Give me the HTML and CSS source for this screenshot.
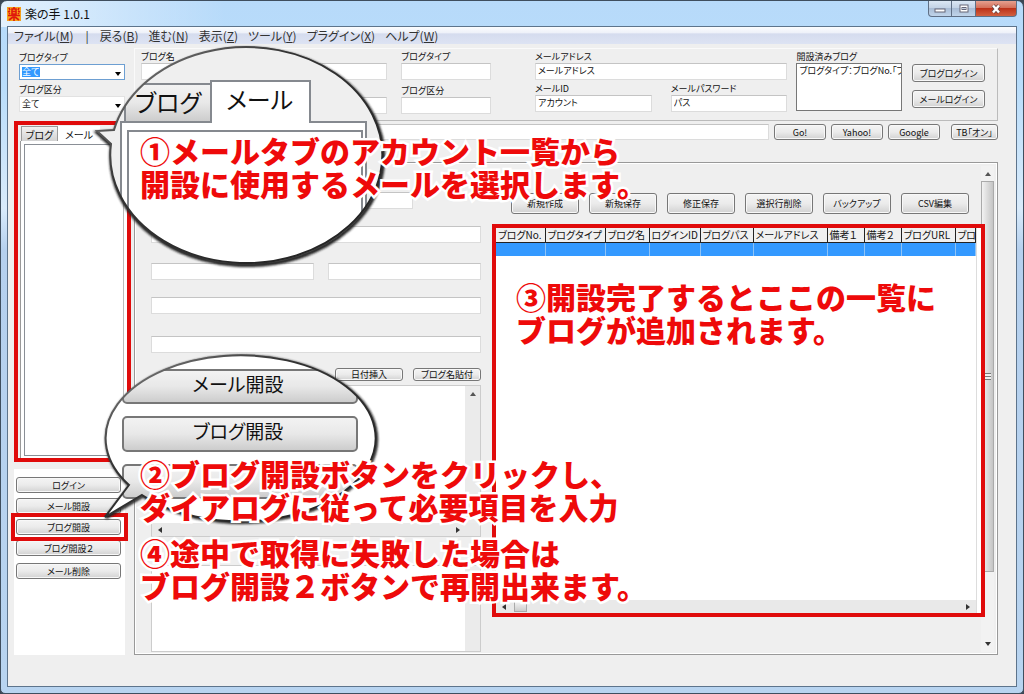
FILE: index.html
```html
<!DOCTYPE html>
<html lang="ja">
<head>
<meta charset="utf-8">
<title>楽の手 1.0.1</title>
<link rel="stylesheet" href="styles.css">
</head>
<body>
<div class="window">
  <header class="titlebar">
    <svg class="app-icon" viewBox="0 0 14 14" aria-hidden="true">
      <rect width="14" height="14" fill="#f5a21b"/>
      <path d="M7 0v2M5 2h4v5H5zM5 4.500h4M2 1l1 2M1 5l2-1M12 1l-1 2M13 5l-2-1M1 8.500h12M7 7v7M6 10l-4 3M8 10l4 3M2 7l1-1M12 7l-1-1" fill="none" stroke="#e0180c" stroke-width="1.600"/>
    </svg>
    <h1 class="title">楽の手 1.0.1</h1>
    <div class="window-buttons">
      <button class="win-btn" aria-label="最小化"><svg width="12" height="10" viewBox="0 0 12 10"><rect x="1" y="5" width="10" height="3" fill="#fff" stroke="#667"/></svg></button>
      <button class="win-btn" aria-label="元に戻す"><svg width="12" height="10" viewBox="0 0 12 10"><rect x="2" y="1" width="8" height="7" fill="#fff" stroke="#667"/><rect x="4" y="3.500" width="4" height="2" fill="#c3cfe0" stroke="#667"/></svg></button>
      <button class="win-btn win-close" aria-label="閉じる"><svg width="12" height="10" viewBox="0 0 12 10"><path d="M3 1.500l6 7M9 1.500l-6 7" stroke="#644" stroke-width="4"/><path d="M3 1.500l6 7M9 1.500l-6 7" stroke="#fff" stroke-width="2.400"/></svg></button>
    </div>
  </header>

  <nav class="menu">
    <span>ファイル(<u>M</u>)</span><span class="sep">|</span><span>戻る(<u>B</u>)</span><span>進む(<u>N</u>)</span><span>表示(<u>Z</u>)</span><span>ツール(<u>Y</u>)</span><span>プラグイン(<u>X</u>)</span><span>ヘルプ(<u>W</u>)</span>
  </nav>

  <main class="work">
    <aside class="side">
      <div class="filters">
        <label class="field"><span>ブログタイプ</span><span class="combo combo-focus"><select class="picked"><option>全て</option></select></span></label>
        <label class="field"><span>ブログ区分</span><span class="combo"><select><option>全て</option></select></span></label>
      </div>
      <section class="accounts">
        <div class="tabs"><button class="tab">ブログ</button><button class="tab tab-on">メール</button></div>
        <div class="account-page"><div class="account-list"></div></div>
      </section>
      <div class="actions">
        <button class="btn">ログイン</button>
        <button class="btn">メール開設</button>
        <div class="marked"><button class="btn">ブログ開設</button></div>
        <button class="btn">ブログ開設２</button>
        <button class="btn btn-apart">メール削除</button>
      </div>
    </aside>

    <div class="body">
      <section class="info">
        <div class="info-col">
          <label class="field"><span>ブログ名</span><input type="text"></label>
          <div class="field"><span></span><input type="text" aria-label="URL"></div>
        </div>
        <div class="info-col">
          <label class="field"><span>ブログタイプ</span><input type="text"></label>
          <label class="field"><span>ブログ区分</span><input type="text"></label>
        </div>
        <div class="info-col info-mail">
          <label class="field"><span>メールアドレス</span><input type="text" value="メールアドレス"></label>
          <div class="pair">
            <label class="field"><span>メールID</span><input type="text" value="アカウント"></label>
            <label class="field"><span>メールパスワード</span><input type="text" value="パス"></label>
          </div>
        </div>
        <label class="field info-list"><span>開設済みブログ</span><select size="4"><option>ブログタイプ：ブログNo.「ブログ名」</option></select></label>
        <div class="logins">
          <button class="btn">ブログログイン</button>
          <button class="btn">メールログイン</button>
        </div>
      </section>

      <div class="url">
        <input type="text" aria-label="アドレス">
        <button class="btn">Go!</button>
        <button class="btn">Yahoo!</button>
        <button class="btn">Google</button>
        <button class="btn btn-tb">TB「オン」</button>
      </div>

      <section class="pane">
        <div class="form">
          <input class="short" type="text" aria-label="件名">
          <input type="text" aria-label="項目1">
          <div class="halves"><input type="text" aria-label="項目2"><input type="text" aria-label="項目3"></div>
          <input type="text" aria-label="項目4">
          <input type="text" aria-label="項目5">
          <div class="form-buttons"><button class="btn">日付挿入</button><button class="btn">ブログ名貼付</button></div>
          <div class="editor">
            <textarea aria-label="本文"></textarea>
            <div class="vbar"><i class="arrow up"></i></div>
            <div class="hbar"><i class="arrow left"></i><i class="arrow right"></i></div>
          </div>
          <div></div>
          <div class="editor">
            <textarea aria-label="追記"></textarea>
            <div class="vbar"></div>
          </div>
        </div>

        <div class="records">
          <div class="record-buttons">
            <button class="btn">新規作成</button><button class="btn">新規保存</button><button class="btn">修正保存</button><button class="btn">選択行削除</button><button class="btn">バックアップ</button><button class="btn">CSV編集</button>
          </div>
          <div class="grid-box">
            <table class="grid">
              <colgroup><col class="c49"><col class="c60"><col class="c44"><col class="c51"><col class="c53"><col class="c74"><col class="c37"><col class="c37"><col class="c54"><col></colgroup>
              <thead><tr><th>ブログNo.</th><th>ブログタイプ</th><th>ブログ名</th><th>ログインID</th><th>ブログパス</th><th>メールアドレス</th><th>備考１</th><th>備考２</th><th>ブログURL</th><th>ブロ</th></tr></thead>
              <tbody><tr><td></td><td></td><td></td><td></td><td></td><td></td><td></td><td></td><td></td><td></td></tr></tbody>
            </table>
            <div class="hbar"><i class="arrow left"></i><i class="thumb"></i><i class="arrow right"></i></div>
          </div>
        </div>

        <div class="pane-bar"><i class="arrow up"></i><i class="thumb"></i><i class="arrow down"></i></div>
      </section>
    </div>
  </main>

  <div class="notes">
    <svg class="balloons" width="1024" height="694" viewBox="0 0 1024 694">
      <defs>
        <linearGradient id="face" x1="0" y1="0" x2="0" y2="1"><stop offset="0" stop-color="#f3f3f3"/><stop offset=".5" stop-color="#e8e8e8"/><stop offset="1" stop-color="#cbcbcb"/></linearGradient>
        <linearGradient id="rim" x1="0" y1="0" x2="1" y2="1"><stop offset="0" stop-color="#8a8a8a"/><stop offset=".35" stop-color="#333"/><stop offset="1" stop-color="#222"/></linearGradient>
        <filter id="soft" x="-10%" y="-10%" width="120%" height="120%"><feGaussianBlur stdDeviation="1"/></filter>
        <path id="b1" d="M114 130L97 131L111 144A136 108 0 1 0 114 130Z"/>
        <path id="b2" d="M129 485L105 517L142 495A135 83 0 1 0 129 485Z"/>
        <clipPath id="clip1"><use href="#b1"/></clipPath>
        <clipPath id="clip2"><use href="#b2"/></clipPath>
      </defs>

      <use href="#b1" transform="translate(1 2)" fill="none" stroke="#222" stroke-width="4" filter="url(#soft)"/>
      <use href="#b1" fill="#efefef"/>
      <g clip-path="url(#clip1)" stroke="#85898f" stroke-width="2">
        <path d="M125 84H211V122H125Z" fill="url(#face)"/>
        <path d="M121 280V122H211V81H310V122H366V280Z" fill="#fff"/>
        <path d="M128 280V131H362V280Z" fill="#fff"/>
        <g stroke="none" class="big-tab"><text x="135" y="112">ブログ</text><text x="226" y="109">メール</text></g>
      </g>
      <use href="#b1" fill="none" stroke="url(#rim)" stroke-width="2"/>

      <use href="#b2" transform="translate(1 1)" fill="none" stroke="#222" stroke-width="3" filter="url(#soft)"/>
      <use href="#b2" fill="#fff"/>
      <g clip-path="url(#clip2)">
        <g fill="url(#face)" stroke="#777" stroke-width="2">
          <rect x="123" y="370" width="234" height="33" rx="4"/>
          <rect x="123" y="417" width="234" height="34" rx="4"/>
          <rect x="123" y="465" width="234" height="33" rx="4"/>
        </g>
        <g class="big-btn"><text x="238" y="392">メール開設</text><text x="238" y="439">ブログ開設</text></g>
      </g>
      <use href="#b2" fill="none" stroke="url(#rim)" stroke-width="2"/>
    </svg>
    <p class="note note-1">①メールタブのアカウント一覧から<br>開設に使用するメールを選択します。</p>
    <p class="note note-2">②ブログ開設ボタンをクリックし、<br>ダイアログに従って必要項目を入力</p>
    <p class="note note-3">③開設完了するとここの一覧に<br>ブログが追加されます。</p>
    <p class="note note-4">④途中で取得に失敗した場合は<br>ブログ開設２ボタンで再開出来ます。</p>
  </div>
</div>
</body>
</html>
```

FILE: styles.css
```css
* { box-sizing: border-box; }

body {
  margin: 0;
  background: #3a4654;
  color: #111;
  font: 9px/12px "Noto Sans CJK JP", sans-serif;
  font-feature-settings: "palt";
}

input, select, textarea, button {
  margin: 0;
  font: inherit;
  font-feature-settings: inherit;
  color: inherit;
}

.window {
  position: relative;
  display: grid;
  grid-template-rows: 25px 18px 1fr;
  min-height: 100vh;
  padding: 0 6px 6px;
  border: 1px solid #3f4e5e;
  border-radius: 7px 7px 5px 5px;
  background:
    linear-gradient(90deg, rgba(255, 255, 255, .6), rgba(255, 255, 255, 0) 22%) top / 100% 26px no-repeat,
    linear-gradient(180deg, #b7dafa, #b9ddfb 12%, #d9ebfb 30%, #b5d0ee 36%, #b8d4f0);
  overflow: hidden;
}

/* title bar */
.titlebar { display: flex; align-items: center; gap: 4px; }
.app-icon { width: 14px; height: 14px; }
.title { flex: 1; margin: 0; font-size: 12px; line-height: 16px; font-weight: 400; }
.window-buttons { display: flex; align-self: flex-start; }
.win-btn {
  display: grid;
  place-items: center;
  width: 24px;
  height: 16px;
  padding: 0;
  border: 1px solid #5f6f85;
  border-top: 0;
  border-left-width: 0;
  background: linear-gradient(#dbe7f4, #c3d3e6 45%, #a9bdd6 50%, #c0d4ea);
}
.win-btn:first-child { border-left-width: 1px; border-radius: 0 0 0 4px; }
.win-close { width: 41px; border-radius: 0 0 4px 0; background: linear-gradient(#e5a08f, #d4705a 45%, #bd3219 50%, #d2603f); }

/* menu */
.menu {
  display: flex;
  align-items: center;
  gap: 10px;
  padding-left: 6px;
  border: 1px solid #5d748c;
  border-bottom: 0;
  background: linear-gradient(#fbfcfe, #eef1f9 35%, #d5dcee 40%, #dde3f3);
  color: #333;
  font-size: 12px;
  line-height: 16px;
  white-space: nowrap;
}
.sep { margin: 0 1px 0 2px; }

/* work area */
.work {
  display: grid;
  grid-template-columns: 117px minmax(0, 1fr);
  gap: 3px;
  padding: 4px 18px 31px 6px;
  border: 1px solid #5d748c;
  border-top: 0;
  background: #efefef;
}
.side { display: flex; flex-direction: column; }
.filters { display: grid; gap: 4px; padding: 4px 6px 9px 5px; }
.field { display: grid; grid-template-rows: 12px auto; min-width: 0; white-space: nowrap; }
.combo { position: relative; display: block; height: 16px; }
.combo select {
  display: block;
  width: 100%;
  height: 16px;
  padding: 0 2px;
  border: 1px solid #e2e2e2;
  border-radius: 0;
  appearance: none;
  background: #fff;
}
.combo .picked {
  border-color: #6d9fd2;
  background: linear-gradient(#3399ff, #3399ff) 2px 2px / 18px 10px no-repeat, #fff;
  color: #fff;
}
.combo::after {
  content: "";
  position: absolute;
  right: 4px;
  top: 8px;
  border: 3px solid transparent;
  border-top: 4px solid #000;
  border-bottom: 0;
}

.accounts {
  display: flex;
  flex: 1;
  flex-direction: column;
  padding: 1px 0 0 2px;
  border: 4px solid #e00b0b;
  background: #efefef;
}
.tabs { display: flex; padding-left: 1px; }
.tab { height: 15px; width: 37px; padding: 0; border: 1px solid #9a9a9a; border-bottom: 0; background: linear-gradient(#f2f2f2, #d2d2d2); font-size: 10px; line-height: 13px; }
.tab-on { width: 42px; border-color: #fff; background: #fff; }
.account-page { flex: 1; display: grid; padding: 3px 3px 2px; border-left: 1px solid #999; background: #fff; }
.account-list { border: 1px solid #8a8f96; border-right-color: #bbb; }

.actions {
  display: grid;
  align-content: start;
  gap: 5px;
  height: 186px;
  margin: 7px 6px 0 0;
  padding: 8px 4px 0 2px;
  background: #fff;
}
.btn {
  width: 100%;
  height: 16px;
  padding: 0;
  border: 1px solid #777;
  border-radius: 3px;
  background: linear-gradient(#f4f4f4, #ebebeb 50%, #d2d2d2);
  box-shadow: inset 0 0 0 1px #f8f8f8;
  line-height: 13px;
  white-space: nowrap;
}
.btn-apart { margin-top: 2px; }
.marked { position: relative; height: 16px; }
.marked::after { content: ""; position: absolute; inset: -6px -7px -6px -5px; border: 4px solid #e00b0b; }

/* account details */
.body { display: grid; grid-template-rows: 73px 16px 1fr; row-gap: 3px; min-width: 0; }
.body input, .body textarea {
  display: block;
  width: 100%;
  min-width: 0;
  height: 17px;
  padding: 0 2px 2px;
  border: 1px solid #dcdcdc;
  border-top-color: #c4c4c4;
  border-radius: 0;
  background: #fff;
}
.info {
  display: grid;
  grid-template-columns: 261fr 134fr 262fr 116fr 73fr;
  padding: 2px 12px 0 6px;
  border: 1px solid #fafafa;
  border-right-color: #bbb;
  border-bottom-color: #bbb;
}
.info-col { display: grid; align-content: start; gap: 5px; margin-right: 14px; min-width: 0; }
.info-col:nth-child(2) { margin-right: 44px; }
.info-mail { gap: 3px; margin-right: 9px; }
.pair { display: grid; grid-template-columns: 1fr 1fr; gap: 19px; }
.info-list { align-content: start; margin-right: 10px; }
.info-list select { width: 100%; height: 48px; padding: 0; border: 1px solid #777; border-radius: 0; appearance: none; background: #fff; overflow: hidden; }
.info-list option { min-height: 11px; padding: 0 2px; line-height: 11px; }
.logins { display: grid; align-content: start; gap: 8px; padding-top: 13px; }
.logins .btn { height: 18px; }

.url { display: grid; grid-template-columns: 1fr 52px 52px 52px 53px; gap: 5px; }
.body .url input { height: 16px; }
.url .btn-tb { justify-self: end; width: 47px; }

/* lower pane */
.pane {
  display: grid;
  grid-template-columns: 330px minmax(0, 1fr) 13px;
  margin-top: 19px;
  padding: 3px 3px 2px 16px;
  border: 1px solid #999;
  outline: 1px solid #fff;
  outline-offset: -2px;
}
.form { display: grid; grid-template-rows: 34px 37px 34px 39px 32px 17px 152px 28px 1fr; padding-top: 26px; min-height: 0; }
.body .short { width: 262px; }
.halves { display: grid; grid-template-columns: 163px 1fr; gap: 14px; }
.form-buttons { display: grid; grid-template-columns: 68px 68px; justify-content: end; gap: 10px; }
.form-buttons .btn { height: 13px; line-height: 11px; }
.editor { display: grid; grid-template-columns: 1fr 15px; grid-template-rows: 1fr auto; border: 1px solid #ccc; min-height: 0; }
.body .editor textarea { height: 100%; border: 0; resize: none; }
.vbar { display: flex; flex-direction: column; align-items: center; padding: 6px 0; background: #ebebeb; }
.hbar { display: flex; align-items: center; height: 13px; padding: 0 6px; background: #e9e9e9; }
.editor .hbar { grid-column: 1 / 3; justify-content: space-between; padding-right: 20px; }
.arrow { border: 3px solid transparent; }
.up { border-top: 0; border-bottom: 4px solid #555; }
.down { border-bottom: 0; border-top: 4px solid #333; }
.left { border-left: 0; border-right: 4px solid #333; }
.right { border-right: 0; border-left: 4px solid #333; }

.records { display: flex; flex-direction: column; min-width: 0; padding: 27px 0 35px 11px; }
.record-buttons { display: grid; grid-template-columns: repeat(6, 68px); gap: 10px; margin-left: 19px; }
.record-buttons .btn { height: 21px; line-height: 18px; }
.grid-box {
  position: relative;
  display: flex;
  flex: 1;
  flex-direction: column;
  justify-content: space-between;
  margin: 10px -4px 0 0;
  padding-right: 5px;
  border: 4px solid #e00b0b;
  background: linear-gradient(#ddd, #ddd) right 4px top / 1px 100% no-repeat, #fff;
}
.grid { width: 100%; table-layout: fixed; border-collapse: collapse; font-size: 10px; }
.grid th { height: 14px; padding: 0 0 0 2px; border-right: 1px solid #222; border-bottom: 1px solid #222; background: #f0f0f0; line-height: 13px; font-weight: 400; text-align: left; white-space: nowrap; overflow: hidden; }
.grid td { height: 14px; padding: 0; border-right: 1px solid #8fc3f5; background: #3399ff; }
.c37 { width: 37px; }
.c44 { width: 44px; }
.c49 { width: 49px; }
.c51 { width: 51px; }
.c53 { width: 53px; }
.c54 { width: 54px; }
.c60 { width: 60px; }
.c74 { width: 74px; }
.grid-box .hbar .thumb { width: 13px; height: 11px; margin-left: 8px; border: 1px solid #aaa; background: linear-gradient(#f4f4f4, #ccc); }
.grid-box .hbar .right { margin-left: auto; }
.pane-bar { display: flex; flex-direction: column; align-items: center; padding: 6px 0; background: #f2f2f2; }
.pane-bar .thumb {
  flex: 0 1 391px;
  width: 100%;
  margin: 5px 0 auto;
  border: 1px solid #aaa;
  background:
    repeating-linear-gradient(#777 0 1px, #eee 1px 3px) center / 7px 7px no-repeat,
    linear-gradient(90deg, #f2f2f2, #c4c4c4);
}

/* instructions laid over the window */
.notes { position: absolute; inset: -1px; pointer-events: none; }
.balloons { position: absolute; left: 0; top: 0; }
.big-tab { font-size: 24px; fill: #111; }
.big-btn { font-size: 19px; fill: #111; text-anchor: middle; }
.note {
  position: absolute;
  left: 140px;
  margin: 0;
  color: #ee0a0a;
  font-size: 30px;
  line-height: 33px;
  font-weight: 900;
  font-feature-settings: normal;
  white-space: nowrap;
  -webkit-text-stroke: 5px #fff;
  paint-order: stroke fill;
  text-shadow: 0 0 3px #fff;
}
.note-1 { top: 134px; }
.note-2 { top: 457px; }
.note-3 { left: 516px; top: 280px; }
.note-4 { top: 536px; }
```
